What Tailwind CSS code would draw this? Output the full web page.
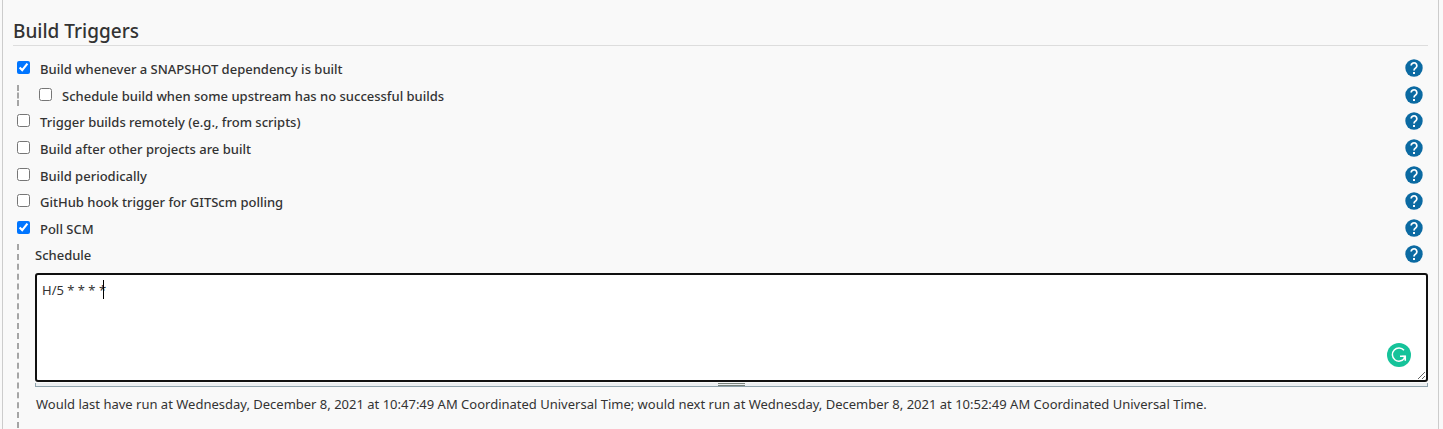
<!DOCTYPE html>
<html lang="en">
<head>
<meta charset="utf-8">
<title>Build Triggers</title>
<script src="https://cdn.jsdelivr.net/npm/@tailwindcss/browser@4"></script>
</head>
<body class="bg-[#f9f9f9] font-['Segoe_UI','Noto_Sans',sans-serif] text-[13px] leading-5 text-[#333]">
<svg class="hidden" aria-hidden="true">
  <symbol id="help" viewBox="0 0 24 24"><circle cx="12" cy="12" r="11.600" fill="#0b6aa2"/><path fill="none" stroke="#fff" stroke-width="2.300" d="M8.200 8.800a3.800 3.800 0 1 1 6.200 3c-1.500 1.100-2.400 1.700-2.400 3.600"/><path fill="#fff" d="M10.700 17.300h2.600v2.600h-2.600z"/></symbol>
</svg>
<main class="ml-[2px] mr-1 min-h-screen border-x border-[#ccc] pl-[10px] pr-[10px] pt-4">
  <h2 class="mb-[9px] h-[30px] border-b border-[#ddd] text-[19px] font-medium leading-[30px]">Build Triggers</h2>

  <div class="flex h-[27px] items-center justify-between pl-1 pr-[5px]">
    <label class="flex items-center gap-[10px] font-medium"><input type="checkbox" checked class="mb-[2px] size-[13px]"><span>Build whenever a SNAPSHOT dependency is built</span></label>
    <button type="button" aria-label="Help" class="mb-px size-[18px]"><svg class="size-full"><use href="#help"/></svg></button>
  </div>
  <div class="flex h-[26px] items-center justify-between pl-1 pr-[5px]">
    <div class="flex h-[21px] items-center border-l-2 border-dashed border-[#a5a5a5] pl-5">
      <label class="flex items-center gap-[10px] font-medium"><input type="checkbox" class="mb-[2px] size-[13px]"><span class="pt-[2px]">Schedule build when some upstream has no successful builds</span></label>
    </div>
    <button type="button" aria-label="Help" class="size-[18px]"><svg class="size-full"><use href="#help"/></svg></button>
  </div>
  <div class="flex h-[27px] items-center justify-between pl-1 pr-[5px]">
    <label class="flex items-center gap-[10px] font-medium"><input type="checkbox" class="mb-[2px] size-[13px]"><span>Trigger builds remotely (e.g., from scripts)</span></label>
    <button type="button" aria-label="Help" class="mb-px size-[18px]"><svg class="size-full"><use href="#help"/></svg></button>
  </div>
  <div class="flex h-[27px] items-center justify-between pl-1 pr-[5px]">
    <label class="flex items-center gap-[10px] font-medium"><input type="checkbox" class="mb-[2px] size-[13px]"><span>Build after other projects are built</span></label>
    <button type="button" aria-label="Help" class="mb-px size-[18px]"><svg class="size-full"><use href="#help"/></svg></button>
  </div>
  <div class="flex h-[26px] items-center justify-between pl-1 pr-[5px]">
    <label class="flex items-center gap-[10px] font-medium"><input type="checkbox" class="mb-[2px] size-[13px]"><span class="pt-[2px]">Build periodically</span></label>
    <button type="button" aria-label="Help" class="size-[18px]"><svg class="size-full"><use href="#help"/></svg></button>
  </div>
  <div class="flex h-[27px] items-center justify-between pl-1 pr-[5px]">
    <label class="flex items-center gap-[10px] font-medium"><input type="checkbox" class="mb-[2px] size-[13px]"><span>GitHub hook trigger for GITScm polling</span></label>
    <button type="button" aria-label="Help" class="mb-px size-[18px]"><svg class="size-full"><use href="#help"/></svg></button>
  </div>
  <div class="flex h-[26px] items-center justify-between pl-1 pr-[5px]">
    <label class="flex items-center gap-[10px] font-medium"><input type="checkbox" checked class="mb-[2px] size-[13px]"><span class="pt-[2px]">Poll SCM</span></label>
    <button type="button" aria-label="Help" class="size-[18px]"><svg class="size-full"><use href="#help"/></svg></button>
  </div>

  <section class="ml-1 mt-[3px] border-l-2 border-dashed border-[#a5a5a5] pb-[14px] pl-4">
    <div class="flex h-[21px] items-center justify-between pr-[5px]">
      <label for="schedule" class="font-medium">Schedule</label>
      <button type="button" aria-label="Help" class="mb-px size-[18px]"><svg class="size-full"><use href="#help"/></svg></button>
    </div>
    <div class="relative mt-2">
      <textarea id="schedule" spellcheck="false" class="block h-[109px] w-full resize-y rounded-[3px] border-2 border-[#101010] bg-white px-[5px] py-[5px] text-[13px] leading-5 outline-none">H/5 * * * *</textarea>
      <span class="absolute left-[68px] top-[7px] h-[19px] w-px bg-black"></span>
      <svg class="absolute bottom-[15px] right-[17px] size-6" viewBox="0 0 24 24" aria-hidden="true"><circle cx="12" cy="12" r="12" fill="#15c39a"/><path fill="none" stroke="#fff" stroke-width="1.500" d="M17 7.300A6.600 6.600 0 1 0 17.500 15.200M13 13.300h5.300v4.500"/><path fill="#fff" d="M15 12.800h3.700v4z"/></svg>
    </div>
    <div class="mt-px flex h-1 justify-center border-x border-b border-[#90a4ae] bg-[#eceff1]">
      <div class="h-[3px] w-[27px] border-y border-[#78827c]"></div>
    </div>
    <p class="mt-[7px] pl-px">Would last have run at Wednesday, December 8, 2021 at 10:47:49 AM Coordinated Universal Time; would next run at Wednesday, December 8, 2021 at 10:52:49 AM Coordinated Universal Time.</p>
  </section>
</main>
</body>
</html>
